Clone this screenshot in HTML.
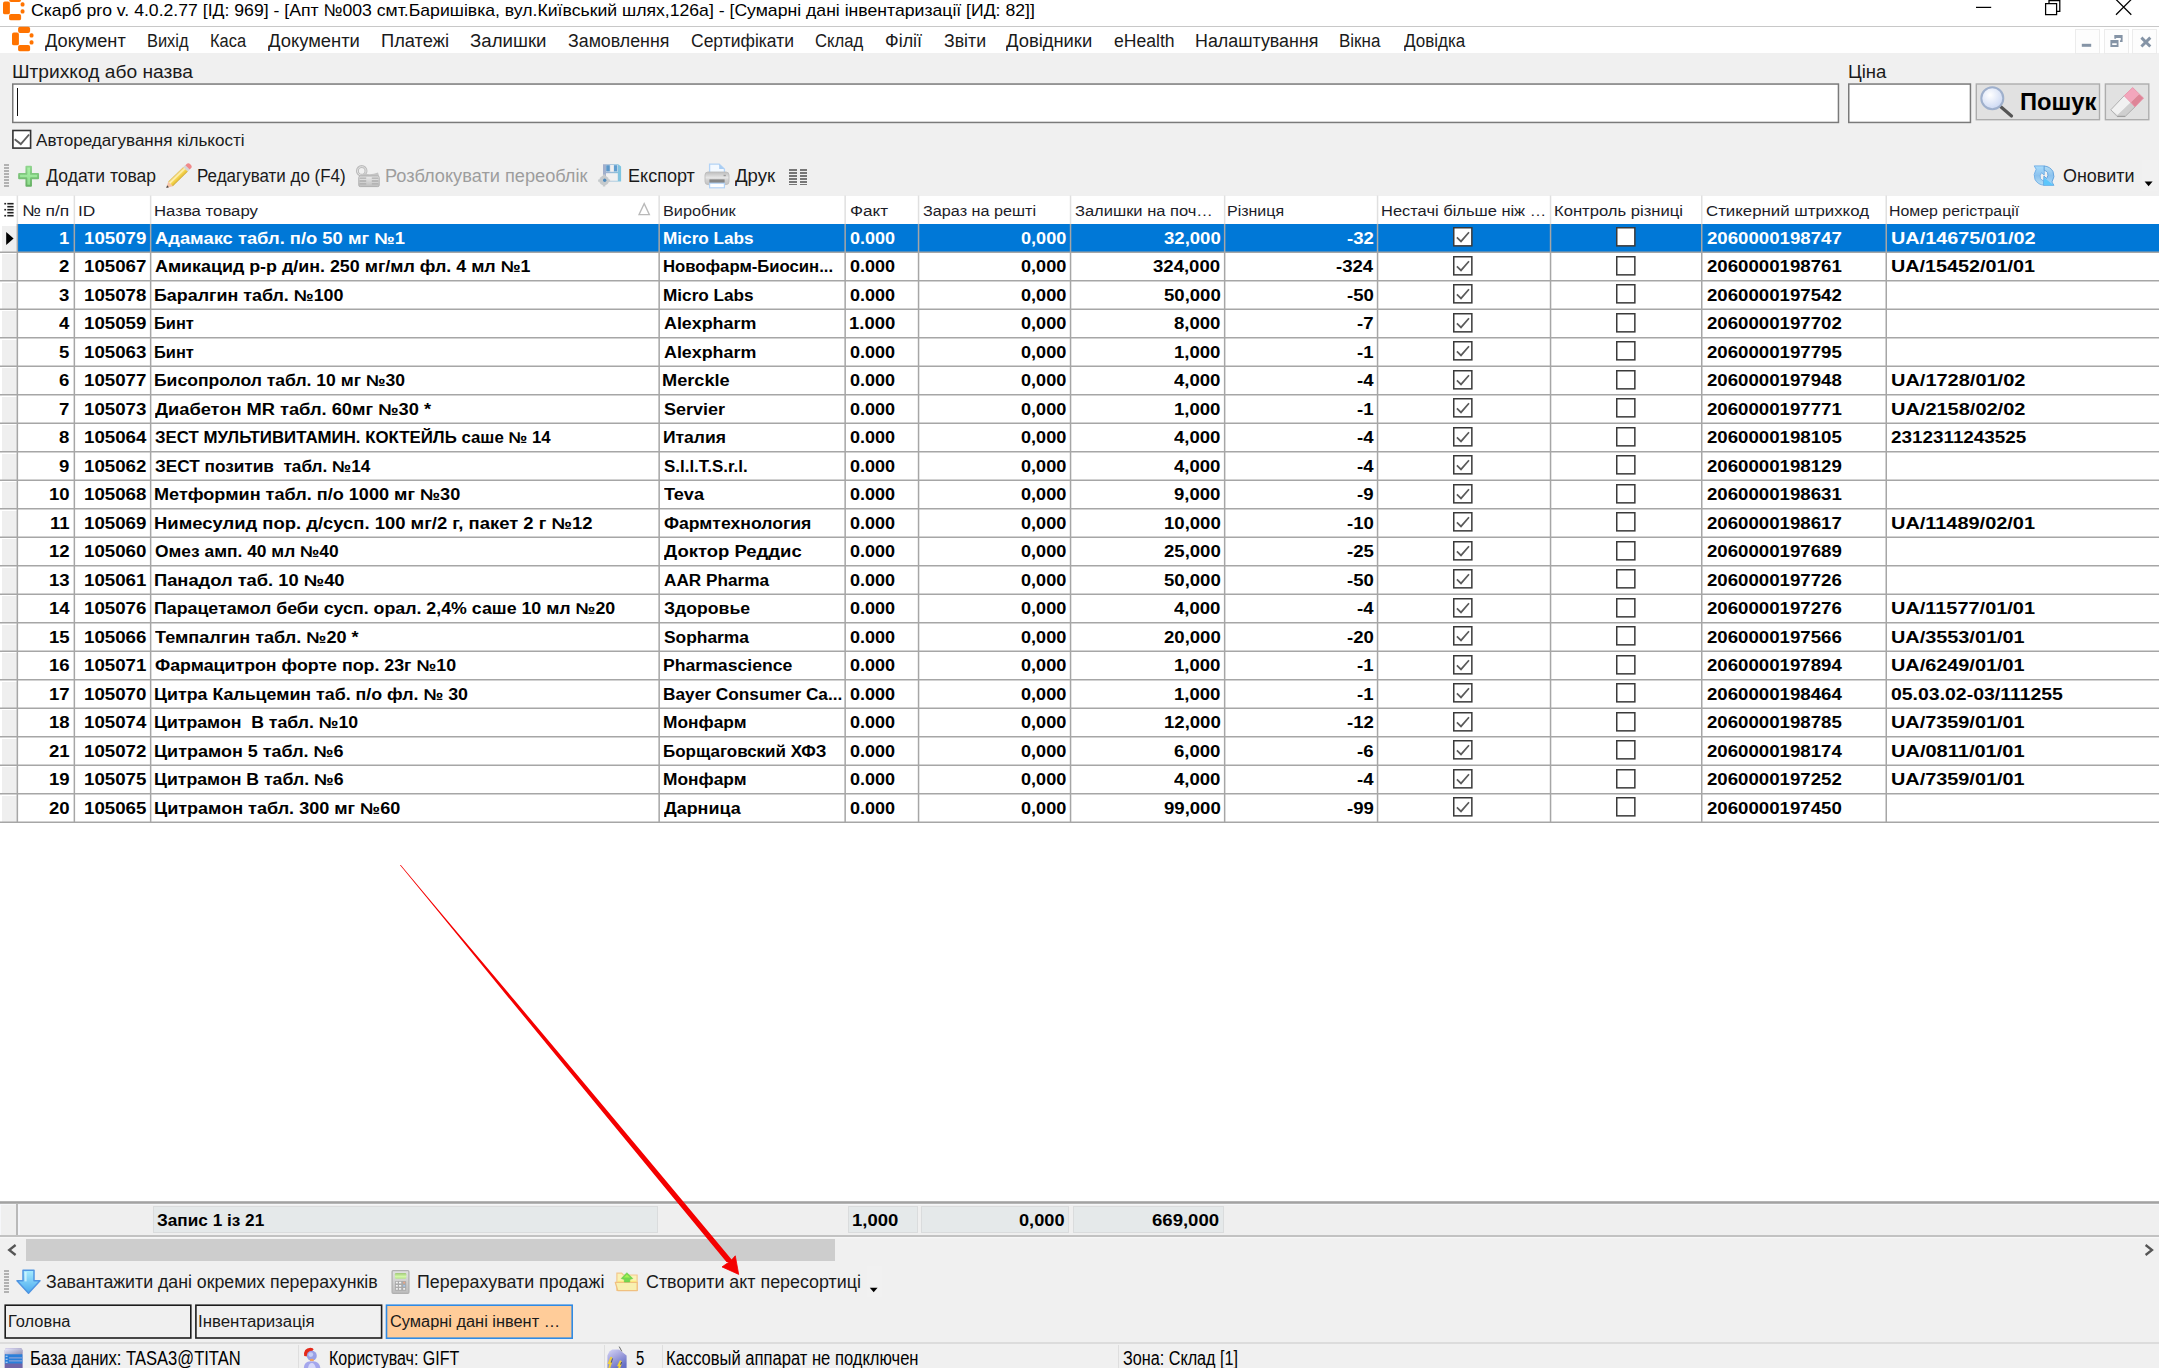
<!DOCTYPE html>
<html lang="uk"><head><meta charset="utf-8"><title>Скарб pro</title>
<style>
html,body{margin:0;padding:0}
body{width:2159px;height:1368px;position:relative;overflow:hidden;background:#f0f0f0;font-family:"Liberation Sans", sans-serif;color:#000}
#r{position:absolute;left:0;top:0;width:2159px;height:1368px;overflow:hidden}
#r>div,#r>svg{position:absolute;box-sizing:border-box}
.t{position:absolute;white-space:pre;line-height:1;transform-origin:0 0;font-size:16px}
</style></head>
<body><div id="r">
<div style="left:0px;top:0px;width:2159px;height:26px;background:#fff"></div>
<div style="left:0px;top:26px;width:2159px;height:1.2px;background:#c8c8c8"></div>
<div style="left:0px;top:27.2px;width:2159px;height:25.8px;background:#fff"></div>
<svg style="left:2.9px;top:-4.2px;width:24px;height:26px;overflow:visible" viewBox="0 0 24 26"><g fill="#ff7300"><rect x="0" y="5.5" width="6.9" height="12.8" rx="1.9"/><rect x="6.1" y="-0.3" width="12" height="6.2" rx="1.9"/><rect x="6.1" y="17.9" width="12" height="6.4" rx="1.9"/><rect x="17.6" y="6.3" width="3.9" height="4.3" rx="1.7"/><rect x="17.6" y="13.3" width="3.9" height="4.3" rx="1.7"/></g></svg>
<svg style="left:11.7px;top:27.4px;width:24px;height:26px;overflow:visible" viewBox="0 0 24 26"><g fill="#ff7300"><rect x="0" y="5.5" width="6.9" height="12.8" rx="1.9"/><rect x="6.1" y="-0.3" width="12" height="6.2" rx="1.9"/><rect x="6.1" y="17.9" width="12" height="6.4" rx="1.9"/><rect x="17.6" y="6.3" width="3.9" height="4.3" rx="1.7"/><rect x="17.6" y="13.3" width="3.9" height="4.3" rx="1.7"/></g></svg>
<svg style="left:1970px;top:0;width:170px;height:20px" viewBox="0 0 170 20"><g stroke="#000" stroke-width="1.25" fill="none"><path d="M6 7.4H21.2"/><path d="M75.6 3.6H86.6V14.6H75.6Z"/><path d="M79 3.6V0.5H89.8V11.4H86.6"/><path d="M146 -0.6L161.3 14.8M161.3 -0.6L146 14.8"/></g></svg>
<div style="left:2075.4px;top:28.5px;width:25px;height:25.2px;background:#fdfdfd;border:1px solid #ececec"></div>
<div style="left:2103.8px;top:28.5px;width:25px;height:25.2px;background:#fdfdfd;border:1px solid #ececec"></div>
<div style="left:2132.2px;top:28.5px;width:25px;height:25.2px;background:#fdfdfd;border:1px solid #ececec"></div>
<svg style="left:2075px;top:28px;width:84px;height:26px" viewBox="0 0 84 26"><g fill="#8594a6"><rect x="6.8" y="15.8" width="9.4" height="3"/><path d="M35.4 12.1h8.1v6.8h-8.1zM37.2 15.2v1.9h4.5v-1.9z" fill-rule="evenodd"/><path d="M39.3 7h8.3v7.1h-2.6v-1.8h0.8v-2.4h-4.7v0.9h-1.8z"/></g><path d="M66.4 9.6l8.9 8.9M75.3 9.6l-8.9 8.9" stroke="#8594a6" stroke-width="2.9"/></svg>
<svg style="left:11px;top:82px;width:1831px;height:43px" viewBox="0 0 1831 43"><rect x="1.75" y="2.05" width="1825.70" height="38.40" fill="#fff" stroke="#7a7a7a" stroke-width="1.5"/></svg>
<div style="left:16.7px;top:88.2px;width:1.3px;height:27.4px;background:#111"></div>
<svg style="left:1847px;top:82px;width:127px;height:43px" viewBox="0 0 127 43"><rect x="1.75" y="2.05" width="121.70" height="38.40" fill="#fff" stroke="#7a7a7a" stroke-width="1.5"/></svg>
<svg style="left:1974px;top:82px;width:128px;height:41px" viewBox="0 0 128 41"><rect x="2.30" y="2.00" width="123.20" height="35.70" fill="#e1e1e1" stroke="#adadad" stroke-width="1.4"/></svg>
<svg style="left:2103px;top:82px;width:48px;height:41px" viewBox="0 0 48 41"><rect x="2.40" y="2.00" width="43.40" height="35.70" fill="#e1e1e1" stroke="#adadad" stroke-width="1.4"/></svg>
<svg style="left:1978px;top:85px;width:40px;height:34px" viewBox="0 0 40 34"><defs><radialGradient id="mg" cx="0.4" cy="0.35" r="0.7"><stop offset="0" stop-color="#fff"/><stop offset="1" stop-color="#c9d6f2"/></radialGradient></defs><path d="M22.5 21.5L33.5 31" stroke="#555" stroke-width="3.2" stroke-linecap="round"/><circle cx="14.3" cy="13.3" r="11" fill="url(#mg)" stroke="#9fb0cc" stroke-width="2"/></svg>
<svg style="left:2106px;top:85px;width:42px;height:34px" viewBox="0 0 42 34"><path d="M18.2 10.7L24.9 17.2L11.8 29.7L4.8 24.8Z" fill="#f1f1f1"/><path d="M24.9 17.2L29 21.9L19.1 31.5H11.2L11.8 29.7Z" fill="#cfcfcf"/><path d="M18.2 10.7L4.8 24.8L11.2 31.5H19.1L29 21.9" fill="none" stroke="#a9a9a9" stroke-width="0.9"/><path d="M11.2 31.4H19.1" stroke="#a0a0a0" stroke-width="1.3"/><path d="M18.2 10.7L26.7 2.6L33.1 9.3L24.9 17.2Z" fill="#f3a6bc"/><path d="M24.9 17.2L33.1 9.3L37.5 13.1L29 21.9Z" fill="#de8597"/><path d="M18.2 10.7L26.7 2.6L37.5 13.1L29 21.9Z" fill="none" stroke="#e88ea4" stroke-width="0.8"/></svg>
<svg style="left:11px;top:128px;width:23px;height:23px" viewBox="0 0 23 23"><rect x="1.90" y="2.50" width="17.70" height="17.60" fill="#fff" stroke="#333" stroke-width="1.6"/></svg>
<svg style="left:12px;top:130px;width:20px;height:20px" viewBox="0 0 20 20"><path d="M2.7 9.2L8.8 14.1L17.1 4.5" fill="none" stroke="#5f5f5f" stroke-width="1.9"/></svg>
<div style="left:4.4px;top:164.0px;width:4.6px;height:1.5px;background:#b2b2b2"></div>
<div style="left:4.4px;top:167.02px;width:4.6px;height:1.5px;background:#b2b2b2"></div>
<div style="left:4.4px;top:170.04px;width:4.6px;height:1.5px;background:#b2b2b2"></div>
<div style="left:4.4px;top:173.06px;width:4.6px;height:1.5px;background:#b2b2b2"></div>
<div style="left:4.4px;top:176.08px;width:4.6px;height:1.5px;background:#b2b2b2"></div>
<div style="left:4.4px;top:179.1px;width:4.6px;height:1.5px;background:#b2b2b2"></div>
<div style="left:4.4px;top:182.12px;width:4.6px;height:1.5px;background:#b2b2b2"></div>
<div style="left:4.4px;top:185.14px;width:4.6px;height:1.5px;background:#b2b2b2"></div>
<svg style="left:17px;top:164px;width:24px;height:24px" viewBox="0 0 24 24"><defs><linearGradient id="pl" x1="0" y1="0" x2="0" y2="1"><stop offset="0" stop-color="#8fd48d"/><stop offset="1" stop-color="#66b164"/></linearGradient><linearGradient id="pf" x1="0" y1="0" x2="0" y2="1"><stop offset="0" stop-color="#aaf3a8"/><stop offset="1" stop-color="#8edb8c"/></linearGradient></defs><path d="M9.4 2.6h4.6v7.3h7.1v4.4h-7.1v7.5H9.4v-7.5H2.1V9.9h7.3z" fill="url(#pf)" stroke="url(#pl)" stroke-width="1.9" stroke-linejoin="round"/></svg>
<svg style="left:165px;top:162px;width:28px;height:28px;overflow:visible" viewBox="0 0 28 28"><defs><linearGradient id="pg" x1="0" y1="0" x2="0" y2="1"><stop offset="0" stop-color="#dcb84a"/><stop offset="0.18" stop-color="#f6e08c"/><stop offset="0.36" stop-color="#fff2b8"/><stop offset="0.55" stop-color="#f6d650"/><stop offset="0.85" stop-color="#e6c23e"/><stop offset="1" stop-color="#c9a02c"/></linearGradient></defs><g transform="translate(1.3 26) rotate(-44.2)"><path d="M0 0L5.9 -3.25V3.25Z" fill="#f7c4a4"/><path d="M0 0L2.4 -1.35V1.35Z" fill="#4a4a4a"/><rect x="5.9" y="-3.25" width="21" height="6.5" fill="url(#pg)"/><rect x="26.9" y="-3.25" width="2.8" height="6.5" fill="#d4d6d8"/><path d="M29.6 -3.1H31.4Q33.8 -3.1 33.8 0T31.4 3.1H29.6Z" fill="#f08a8a"/></g></svg>
<svg style="left:355px;top:164px;width:26px;height:24px" viewBox="0 0 26 24"><defs><linearGradient id="lk" x1="0" y1="0" x2="0" y2="1"><stop offset="0" stop-color="#ececec"/><stop offset="1" stop-color="#bdbdbd"/></linearGradient></defs><circle cx="6.7" cy="6.9" r="4.3" fill="none" stroke="#bcbcbc" stroke-width="3"/><circle cx="6.7" cy="6.9" r="4.3" fill="none" stroke="#e2e2e2" stroke-width="1"/><path d="M3.8 12.6L9.6 9.6Q16 11.4 23 8.6L24.2 12.6Z" fill="#c4c4c4"/><rect x="3.8" y="12" width="20.4" height="10.6" rx="1.4" fill="url(#lk)" stroke="#b0b0b0" stroke-width="1"/><path d="M4.6 14.1h6.6M4.6 17h6.6M4.6 19.9h6.6M16.8 14.1h6.6M16.8 17h6.6M16.8 19.9h6.6" stroke="#adadad" stroke-width="1.4"/></svg>
<svg style="left:598px;top:163px;width:25px;height:25px" viewBox="0 0 25 25"><defs><linearGradient id="fl" x1="0" y1="0" x2="1" y2="0"><stop offset="0" stop-color="#a3aecb"/><stop offset="0.55" stop-color="#96bcd8"/><stop offset="1" stop-color="#7cc6e2"/></linearGradient></defs><path d="M5 1.2h15.2l2.9 2.2v15.2H5z" fill="url(#fl)"/><rect x="8" y="2" width="11.8" height="6.8" fill="#dfe7f1"/><rect x="8.2" y="2.2" width="3.6" height="6.2" fill="#5c97c9"/><rect x="16" y="2.2" width="3.2" height="6.2" fill="#5f9dcf"/><rect x="13" y="2.2" width="2" height="6.2" fill="#f3efec"/><rect x="8" y="10.2" width="11.8" height="7.6" fill="#f1f1f1"/><circle cx="6.1" cy="17.6" r="4.9" fill="#c6cacc"/><path d="M6.1 11.6v12M0.1 17.6h12" stroke="#c6cacc" stroke-width="2.4"/><circle cx="6.7" cy="17.2" r="1.7" fill="#4f8abb"/></svg>
<svg style="left:704px;top:163px;width:26px;height:26px" viewBox="0 0 26 26"><defs><linearGradient id="pr" x1="0" y1="0" x2="0" y2="1"><stop offset="0" stop-color="#bdbdbd"/><stop offset="0.45" stop-color="#e6e6e6"/><stop offset="0.62" stop-color="#d2d2d2"/><stop offset="1" stop-color="#c2c2c2"/></linearGradient></defs><path d="M5.6 1.2h9.6l5.2 4.8V10H5.6z" fill="#f3f9ff" stroke="#b3d3f6" stroke-width="1.3"/><path d="M15.2 1.2v4.8h5.2z" fill="#a9cdf3"/><rect x="1" y="9" width="24" height="12.6" rx="3" fill="url(#pr)" stroke="#bcbcbc" stroke-width="0.9"/><rect x="5.4" y="16.4" width="15.2" height="3.6" fill="#858585"/><rect x="19.6" y="11.8" width="2.2" height="1.4" fill="#9a9a9a"/><rect x="5.6" y="20.2" width="14.8" height="4.6" fill="#fdfeff" stroke="#b3d3f6" stroke-width="1.2"/></svg>
<div style="left:789.2px;top:169.2px;width:7.4px;height:1.5px;background:#777"></div>
<div style="left:799.6px;top:169.2px;width:7.4px;height:1.5px;background:#777"></div>
<div style="left:789.2px;top:172.14999999999998px;width:7.4px;height:1.5px;background:#777"></div>
<div style="left:799.6px;top:172.14999999999998px;width:7.4px;height:1.5px;background:#777"></div>
<div style="left:789.2px;top:175.1px;width:7.4px;height:1.5px;background:#777"></div>
<div style="left:799.6px;top:175.1px;width:7.4px;height:1.5px;background:#777"></div>
<div style="left:789.2px;top:178.04999999999998px;width:7.4px;height:1.5px;background:#777"></div>
<div style="left:799.6px;top:178.04999999999998px;width:7.4px;height:1.5px;background:#777"></div>
<div style="left:789.2px;top:181.0px;width:7.4px;height:1.5px;background:#777"></div>
<div style="left:799.6px;top:181.0px;width:7.4px;height:1.5px;background:#777"></div>
<div style="left:789.2px;top:183.95px;width:7.4px;height:1.5px;background:#777"></div>
<div style="left:799.6px;top:183.95px;width:7.4px;height:1.5px;background:#777"></div>
<svg style="left:2033px;top:164px;width:24px;height:24px" viewBox="0 0 24 24"><defs><linearGradient id="r1" x1="0" y1="0" x2="0" y2="1"><stop offset="0" stop-color="#a8dcfc"/><stop offset="0.5" stop-color="#8cc2ee"/><stop offset="1" stop-color="#b6def4"/></linearGradient><linearGradient id="r2" x1="0" y1="0" x2="0" y2="1"><stop offset="0" stop-color="#c4e0f2"/><stop offset="0.5" stop-color="#8ec8ee"/><stop offset="1" stop-color="#5cc6fb"/></linearGradient></defs><path id="ra" d="M1.2 1.9H11.4L11.2 11.1L8.5 8.7Q6.3 11.6 7.5 14.6Q8.8 16.5 10.9 16.9V21.2Q5 20.7 2.1 15.7Q-0.3 10.5 3.2 5.2Z" fill="url(#r1)" stroke="#6faee6" stroke-width="0.9" stroke-linejoin="round"/><path d="M1.2 1.9H11.4L11.2 11.1L8.5 8.7Q6.3 11.6 7.5 14.6Q8.8 16.5 10.9 16.9V21.2Q5 20.7 2.1 15.7Q-0.3 10.5 3.2 5.2Z" transform="rotate(180 11.05 11.6)" fill="url(#r1)" stroke="#5c9fdc" stroke-width="0.9" stroke-linejoin="round"/><path d="M10.8 13.4L20.8 21.2H10.8Z" fill="#5cc6fb"/></svg>
<div style="left:2142px;top:159.5px;width:15.5px;height:31.5px;background:#f1f1f1"></div>
<svg style="left:2144px;top:181px;width:10px;height:6px" viewBox="0 0 10 6"><path d="M0.6 0.6H8.6L4.6 5.2Z" fill="#000"/></svg>
<div style="left:0px;top:195.5px;width:2159px;height:1005.7px;background:#fff"></div>
<div style="left:2.0px;top:225.8px;width:14.6px;height:25.8px;background:#efefef"></div>
<div style="left:2.0px;top:254.3px;width:14.6px;height:25.8px;background:#efefef"></div>
<div style="left:2.0px;top:282.8px;width:14.6px;height:25.8px;background:#efefef"></div>
<div style="left:2.0px;top:311.3px;width:14.6px;height:25.8px;background:#efefef"></div>
<div style="left:2.0px;top:339.8px;width:14.6px;height:25.8px;background:#efefef"></div>
<div style="left:2.0px;top:368.3px;width:14.6px;height:25.8px;background:#efefef"></div>
<div style="left:2.0px;top:396.8px;width:14.6px;height:25.8px;background:#efefef"></div>
<div style="left:2.0px;top:425.3px;width:14.6px;height:25.8px;background:#efefef"></div>
<div style="left:2.0px;top:453.8px;width:14.6px;height:25.8px;background:#efefef"></div>
<div style="left:2.0px;top:482.3px;width:14.6px;height:25.8px;background:#efefef"></div>
<div style="left:2.0px;top:510.8px;width:14.6px;height:25.8px;background:#efefef"></div>
<div style="left:2.0px;top:539.3px;width:14.6px;height:25.8px;background:#efefef"></div>
<div style="left:2.0px;top:567.8px;width:14.6px;height:25.8px;background:#efefef"></div>
<div style="left:2.0px;top:596.3px;width:14.6px;height:25.8px;background:#efefef"></div>
<div style="left:2.0px;top:624.8px;width:14.6px;height:25.8px;background:#efefef"></div>
<div style="left:2.0px;top:653.3px;width:14.6px;height:25.8px;background:#efefef"></div>
<div style="left:2.0px;top:681.8px;width:14.6px;height:25.8px;background:#efefef"></div>
<div style="left:2.0px;top:710.3px;width:14.6px;height:25.8px;background:#efefef"></div>
<div style="left:2.0px;top:738.8px;width:14.6px;height:25.8px;background:#efefef"></div>
<div style="left:2.0px;top:767.3px;width:14.6px;height:25.8px;background:#efefef"></div>
<div style="left:2.0px;top:795.8px;width:14.6px;height:25.8px;background:#efefef"></div>
<div style="left:16.8px;top:224.0px;width:2142.2px;height:27.8px;background:#0078d7"></div>
<svg style="left:0;top:0;width:2159px;height:830px" viewBox="0 0 2159 830" fill="none"><path d="M17.35 195.5V224.0M74.35 195.5V224.0M150.65 195.5V224.0M659.15 195.5V224.0M845.15 195.5V224.0M918.55 195.5V224.0M1070.55 195.5V224.0M1224.65 195.5V224.0M1377.55 195.5V224.0M1550.55 195.5V224.0M1701.75 195.5V224.0M1886.25 195.5V224.0" stroke="#e0e0e0" stroke-width="1.5"/><path d="M0 252.30H2159M0 280.80H2159M0 309.30H2159M0 337.80H2159M0 366.30H2159M0 394.80H2159M0 423.30H2159M0 451.80H2159M0 480.30H2159M0 508.80H2159M0 537.30H2159M0 565.80H2159M0 594.30H2159M0 622.80H2159M0 651.30H2159M0 679.80H2159M0 708.30H2159M0 736.80H2159M0 765.30H2159M0 793.80H2159M0 822.30H2159M17.35 224.0V823.0M74.35 224.0V823.0M150.65 224.0V823.0M659.15 224.0V823.0M845.15 224.0V823.0M918.55 224.0V823.0M1070.55 224.0V823.0M1224.65 224.0V823.0M1377.55 224.0V823.0M1550.55 224.0V823.0M1701.75 224.0V823.0M1886.25 224.0V823.0" stroke="#a6a6a6" stroke-width="1.5"/></svg>
<svg style="left:3px;top:201px;width:13px;height:18px" viewBox="0 0 13 18" fill="#222"><rect x="4.3" y="1.9" width="6.3" height="1.6"/><rect x="4.3" y="4.9" width="6.3" height="1.6"/><rect x="4.3" y="7.9" width="6.3" height="1.6"/><rect x="4.3" y="10.9" width="6.3" height="1.6"/><rect x="4.3" y="13.9" width="6.3" height="1.6"/><rect x="1.3" y="1.9" width="1.8" height="1.6"/><rect x="1.3" y="7.9" width="1.8" height="1.6"/><rect x="1.3" y="13.9" width="1.8" height="1.6"/></svg>
<svg style="left:5px;top:231px;width:10px;height:15px" viewBox="0 0 10 15"><path d="M1.2 0.9L8.6 7.4L1.2 14Z" fill="#000"/></svg>
<svg style="left:637px;top:202px;width:14px;height:14px" viewBox="0 0 14 14"><path d="M7.2 1.6L12.4 12.6H2Z" fill="#fff" stroke="#b9b9b9" stroke-width="1.3"/></svg>
<svg style="left:1453.1px;top:227.4px;width:20px;height:20px" viewBox="0 0 20 20"><rect x="0.75" y="0.75" width="18.1" height="18.1" fill="#fff" stroke="#3a3a3a" stroke-width="1.5"/><path d="M3.9 10.4L8 14.4L16 5.2" fill="none" stroke="#5a5a5a" stroke-width="1.7"/></svg>
<svg style="left:1615.7px;top:227.4px;width:20px;height:20px" viewBox="0 0 20 20"><rect x="0.75" y="0.75" width="18.1" height="18.1" fill="#fff" stroke="#3a3a3a" stroke-width="1.5"/></svg>
<svg style="left:1453.1px;top:255.9px;width:20px;height:20px" viewBox="0 0 20 20"><rect x="0.75" y="0.75" width="18.1" height="18.1" fill="#fff" stroke="#3a3a3a" stroke-width="1.5"/><path d="M3.9 10.4L8 14.4L16 5.2" fill="none" stroke="#5a5a5a" stroke-width="1.7"/></svg>
<svg style="left:1615.7px;top:255.9px;width:20px;height:20px" viewBox="0 0 20 20"><rect x="0.75" y="0.75" width="18.1" height="18.1" fill="#fff" stroke="#3a3a3a" stroke-width="1.5"/></svg>
<svg style="left:1453.1px;top:284.4px;width:20px;height:20px" viewBox="0 0 20 20"><rect x="0.75" y="0.75" width="18.1" height="18.1" fill="#fff" stroke="#3a3a3a" stroke-width="1.5"/><path d="M3.9 10.4L8 14.4L16 5.2" fill="none" stroke="#5a5a5a" stroke-width="1.7"/></svg>
<svg style="left:1615.7px;top:284.4px;width:20px;height:20px" viewBox="0 0 20 20"><rect x="0.75" y="0.75" width="18.1" height="18.1" fill="#fff" stroke="#3a3a3a" stroke-width="1.5"/></svg>
<svg style="left:1453.1px;top:312.9px;width:20px;height:20px" viewBox="0 0 20 20"><rect x="0.75" y="0.75" width="18.1" height="18.1" fill="#fff" stroke="#3a3a3a" stroke-width="1.5"/><path d="M3.9 10.4L8 14.4L16 5.2" fill="none" stroke="#5a5a5a" stroke-width="1.7"/></svg>
<svg style="left:1615.7px;top:312.9px;width:20px;height:20px" viewBox="0 0 20 20"><rect x="0.75" y="0.75" width="18.1" height="18.1" fill="#fff" stroke="#3a3a3a" stroke-width="1.5"/></svg>
<svg style="left:1453.1px;top:341.4px;width:20px;height:20px" viewBox="0 0 20 20"><rect x="0.75" y="0.75" width="18.1" height="18.1" fill="#fff" stroke="#3a3a3a" stroke-width="1.5"/><path d="M3.9 10.4L8 14.4L16 5.2" fill="none" stroke="#5a5a5a" stroke-width="1.7"/></svg>
<svg style="left:1615.7px;top:341.4px;width:20px;height:20px" viewBox="0 0 20 20"><rect x="0.75" y="0.75" width="18.1" height="18.1" fill="#fff" stroke="#3a3a3a" stroke-width="1.5"/></svg>
<svg style="left:1453.1px;top:369.9px;width:20px;height:20px" viewBox="0 0 20 20"><rect x="0.75" y="0.75" width="18.1" height="18.1" fill="#fff" stroke="#3a3a3a" stroke-width="1.5"/><path d="M3.9 10.4L8 14.4L16 5.2" fill="none" stroke="#5a5a5a" stroke-width="1.7"/></svg>
<svg style="left:1615.7px;top:369.9px;width:20px;height:20px" viewBox="0 0 20 20"><rect x="0.75" y="0.75" width="18.1" height="18.1" fill="#fff" stroke="#3a3a3a" stroke-width="1.5"/></svg>
<svg style="left:1453.1px;top:398.4px;width:20px;height:20px" viewBox="0 0 20 20"><rect x="0.75" y="0.75" width="18.1" height="18.1" fill="#fff" stroke="#3a3a3a" stroke-width="1.5"/><path d="M3.9 10.4L8 14.4L16 5.2" fill="none" stroke="#5a5a5a" stroke-width="1.7"/></svg>
<svg style="left:1615.7px;top:398.4px;width:20px;height:20px" viewBox="0 0 20 20"><rect x="0.75" y="0.75" width="18.1" height="18.1" fill="#fff" stroke="#3a3a3a" stroke-width="1.5"/></svg>
<svg style="left:1453.1px;top:426.9px;width:20px;height:20px" viewBox="0 0 20 20"><rect x="0.75" y="0.75" width="18.1" height="18.1" fill="#fff" stroke="#3a3a3a" stroke-width="1.5"/><path d="M3.9 10.4L8 14.4L16 5.2" fill="none" stroke="#5a5a5a" stroke-width="1.7"/></svg>
<svg style="left:1615.7px;top:426.9px;width:20px;height:20px" viewBox="0 0 20 20"><rect x="0.75" y="0.75" width="18.1" height="18.1" fill="#fff" stroke="#3a3a3a" stroke-width="1.5"/></svg>
<svg style="left:1453.1px;top:455.4px;width:20px;height:20px" viewBox="0 0 20 20"><rect x="0.75" y="0.75" width="18.1" height="18.1" fill="#fff" stroke="#3a3a3a" stroke-width="1.5"/><path d="M3.9 10.4L8 14.4L16 5.2" fill="none" stroke="#5a5a5a" stroke-width="1.7"/></svg>
<svg style="left:1615.7px;top:455.4px;width:20px;height:20px" viewBox="0 0 20 20"><rect x="0.75" y="0.75" width="18.1" height="18.1" fill="#fff" stroke="#3a3a3a" stroke-width="1.5"/></svg>
<svg style="left:1453.1px;top:483.9px;width:20px;height:20px" viewBox="0 0 20 20"><rect x="0.75" y="0.75" width="18.1" height="18.1" fill="#fff" stroke="#3a3a3a" stroke-width="1.5"/><path d="M3.9 10.4L8 14.4L16 5.2" fill="none" stroke="#5a5a5a" stroke-width="1.7"/></svg>
<svg style="left:1615.7px;top:483.9px;width:20px;height:20px" viewBox="0 0 20 20"><rect x="0.75" y="0.75" width="18.1" height="18.1" fill="#fff" stroke="#3a3a3a" stroke-width="1.5"/></svg>
<svg style="left:1453.1px;top:512.4px;width:20px;height:20px" viewBox="0 0 20 20"><rect x="0.75" y="0.75" width="18.1" height="18.1" fill="#fff" stroke="#3a3a3a" stroke-width="1.5"/><path d="M3.9 10.4L8 14.4L16 5.2" fill="none" stroke="#5a5a5a" stroke-width="1.7"/></svg>
<svg style="left:1615.7px;top:512.4px;width:20px;height:20px" viewBox="0 0 20 20"><rect x="0.75" y="0.75" width="18.1" height="18.1" fill="#fff" stroke="#3a3a3a" stroke-width="1.5"/></svg>
<svg style="left:1453.1px;top:540.9px;width:20px;height:20px" viewBox="0 0 20 20"><rect x="0.75" y="0.75" width="18.1" height="18.1" fill="#fff" stroke="#3a3a3a" stroke-width="1.5"/><path d="M3.9 10.4L8 14.4L16 5.2" fill="none" stroke="#5a5a5a" stroke-width="1.7"/></svg>
<svg style="left:1615.7px;top:540.9px;width:20px;height:20px" viewBox="0 0 20 20"><rect x="0.75" y="0.75" width="18.1" height="18.1" fill="#fff" stroke="#3a3a3a" stroke-width="1.5"/></svg>
<svg style="left:1453.1px;top:569.4px;width:20px;height:20px" viewBox="0 0 20 20"><rect x="0.75" y="0.75" width="18.1" height="18.1" fill="#fff" stroke="#3a3a3a" stroke-width="1.5"/><path d="M3.9 10.4L8 14.4L16 5.2" fill="none" stroke="#5a5a5a" stroke-width="1.7"/></svg>
<svg style="left:1615.7px;top:569.4px;width:20px;height:20px" viewBox="0 0 20 20"><rect x="0.75" y="0.75" width="18.1" height="18.1" fill="#fff" stroke="#3a3a3a" stroke-width="1.5"/></svg>
<svg style="left:1453.1px;top:597.9px;width:20px;height:20px" viewBox="0 0 20 20"><rect x="0.75" y="0.75" width="18.1" height="18.1" fill="#fff" stroke="#3a3a3a" stroke-width="1.5"/><path d="M3.9 10.4L8 14.4L16 5.2" fill="none" stroke="#5a5a5a" stroke-width="1.7"/></svg>
<svg style="left:1615.7px;top:597.9px;width:20px;height:20px" viewBox="0 0 20 20"><rect x="0.75" y="0.75" width="18.1" height="18.1" fill="#fff" stroke="#3a3a3a" stroke-width="1.5"/></svg>
<svg style="left:1453.1px;top:626.4px;width:20px;height:20px" viewBox="0 0 20 20"><rect x="0.75" y="0.75" width="18.1" height="18.1" fill="#fff" stroke="#3a3a3a" stroke-width="1.5"/><path d="M3.9 10.4L8 14.4L16 5.2" fill="none" stroke="#5a5a5a" stroke-width="1.7"/></svg>
<svg style="left:1615.7px;top:626.4px;width:20px;height:20px" viewBox="0 0 20 20"><rect x="0.75" y="0.75" width="18.1" height="18.1" fill="#fff" stroke="#3a3a3a" stroke-width="1.5"/></svg>
<svg style="left:1453.1px;top:654.9px;width:20px;height:20px" viewBox="0 0 20 20"><rect x="0.75" y="0.75" width="18.1" height="18.1" fill="#fff" stroke="#3a3a3a" stroke-width="1.5"/><path d="M3.9 10.4L8 14.4L16 5.2" fill="none" stroke="#5a5a5a" stroke-width="1.7"/></svg>
<svg style="left:1615.7px;top:654.9px;width:20px;height:20px" viewBox="0 0 20 20"><rect x="0.75" y="0.75" width="18.1" height="18.1" fill="#fff" stroke="#3a3a3a" stroke-width="1.5"/></svg>
<svg style="left:1453.1px;top:683.4px;width:20px;height:20px" viewBox="0 0 20 20"><rect x="0.75" y="0.75" width="18.1" height="18.1" fill="#fff" stroke="#3a3a3a" stroke-width="1.5"/><path d="M3.9 10.4L8 14.4L16 5.2" fill="none" stroke="#5a5a5a" stroke-width="1.7"/></svg>
<svg style="left:1615.7px;top:683.4px;width:20px;height:20px" viewBox="0 0 20 20"><rect x="0.75" y="0.75" width="18.1" height="18.1" fill="#fff" stroke="#3a3a3a" stroke-width="1.5"/></svg>
<svg style="left:1453.1px;top:711.9px;width:20px;height:20px" viewBox="0 0 20 20"><rect x="0.75" y="0.75" width="18.1" height="18.1" fill="#fff" stroke="#3a3a3a" stroke-width="1.5"/><path d="M3.9 10.4L8 14.4L16 5.2" fill="none" stroke="#5a5a5a" stroke-width="1.7"/></svg>
<svg style="left:1615.7px;top:711.9px;width:20px;height:20px" viewBox="0 0 20 20"><rect x="0.75" y="0.75" width="18.1" height="18.1" fill="#fff" stroke="#3a3a3a" stroke-width="1.5"/></svg>
<svg style="left:1453.1px;top:740.4px;width:20px;height:20px" viewBox="0 0 20 20"><rect x="0.75" y="0.75" width="18.1" height="18.1" fill="#fff" stroke="#3a3a3a" stroke-width="1.5"/><path d="M3.9 10.4L8 14.4L16 5.2" fill="none" stroke="#5a5a5a" stroke-width="1.7"/></svg>
<svg style="left:1615.7px;top:740.4px;width:20px;height:20px" viewBox="0 0 20 20"><rect x="0.75" y="0.75" width="18.1" height="18.1" fill="#fff" stroke="#3a3a3a" stroke-width="1.5"/></svg>
<svg style="left:1453.1px;top:768.9px;width:20px;height:20px" viewBox="0 0 20 20"><rect x="0.75" y="0.75" width="18.1" height="18.1" fill="#fff" stroke="#3a3a3a" stroke-width="1.5"/><path d="M3.9 10.4L8 14.4L16 5.2" fill="none" stroke="#5a5a5a" stroke-width="1.7"/></svg>
<svg style="left:1615.7px;top:768.9px;width:20px;height:20px" viewBox="0 0 20 20"><rect x="0.75" y="0.75" width="18.1" height="18.1" fill="#fff" stroke="#3a3a3a" stroke-width="1.5"/></svg>
<svg style="left:1453.1px;top:797.4px;width:20px;height:20px" viewBox="0 0 20 20"><rect x="0.75" y="0.75" width="18.1" height="18.1" fill="#fff" stroke="#3a3a3a" stroke-width="1.5"/><path d="M3.9 10.4L8 14.4L16 5.2" fill="none" stroke="#5a5a5a" stroke-width="1.7"/></svg>
<svg style="left:1615.7px;top:797.4px;width:20px;height:20px" viewBox="0 0 20 20"><rect x="0.75" y="0.75" width="18.1" height="18.1" fill="#fff" stroke="#3a3a3a" stroke-width="1.5"/></svg>
<div style="left:0px;top:1203.7px;width:2159px;height:32px;background:#efefef"></div>
<div style="left:0px;top:1203.9px;width:2159px;height:1.3px;background:#f5f6f8"></div>
<div style="left:0px;top:1204px;width:1.4px;height:31px;background:#f6f7fa"></div>
<div style="left:18.0px;top:1204px;width:1.5px;height:31px;background:#f4f5f8"></div>
<div style="left:16.2px;top:1203.7px;width:1.7px;height:31.4px;background:#b9b9b9"></div>
<svg style="left:0;top:1199px;width:2159px;height:6px" viewBox="0 0 2159 6"><path d="M0 3.5H2159" stroke="#a2a2a2" stroke-width="2.7"/></svg>
<div style="left:153.2px;top:1205.8px;width:505.0px;height:27.6px;background:#e5e9ea;border:1px solid #dadcdd"></div>
<div style="left:847.9px;top:1205.8px;width:69.8px;height:27.6px;background:#e5e9ea;border:1px solid #dadcdd"></div>
<div style="left:921.0px;top:1205.8px;width:148.4px;height:27.6px;background:#e5e9ea;border:1px solid #dadcdd"></div>
<div style="left:1072.6px;top:1205.8px;width:151.6px;height:27.6px;background:#e5e9ea;border:1px solid #dadcdd"></div>
<svg style="left:0;top:1233px;width:2159px;height:6px" viewBox="0 0 2159 6"><path d="M0 2.9H2159" stroke="#c2c2c2" stroke-width="2"/><path d="M0 4.6H2159" stroke="#f7f7f7" stroke-width="1.4"/></svg>
<div style="left:25.8px;top:1238.6px;width:809.7px;height:22.0px;background:#cdcdcd"></div>
<svg style="left:6px;top:1243px;width:12px;height:14px" viewBox="0 0 12 14"><path d="M9.6 2L3.2 7L9.6 12" fill="none" stroke="#555" stroke-width="2.3"/></svg>
<svg style="left:2142.5px;top:1243px;width:12px;height:14px" viewBox="0 0 12 14"><path d="M2.6 2L9 7L2.6 12" fill="none" stroke="#555" stroke-width="2.3"/></svg>
<div style="left:4.4px;top:1270.0px;width:4.6px;height:1.5px;background:#b2b2b2"></div>
<div style="left:4.4px;top:1273.02px;width:4.6px;height:1.5px;background:#b2b2b2"></div>
<div style="left:4.4px;top:1276.04px;width:4.6px;height:1.5px;background:#b2b2b2"></div>
<div style="left:4.4px;top:1279.06px;width:4.6px;height:1.5px;background:#b2b2b2"></div>
<div style="left:4.4px;top:1282.08px;width:4.6px;height:1.5px;background:#b2b2b2"></div>
<div style="left:4.4px;top:1285.1px;width:4.6px;height:1.5px;background:#b2b2b2"></div>
<div style="left:4.4px;top:1288.12px;width:4.6px;height:1.5px;background:#b2b2b2"></div>
<div style="left:4.4px;top:1291.14px;width:4.6px;height:1.5px;background:#b2b2b2"></div>
<svg style="left:15px;top:1268px;width:27px;height:27px" viewBox="0 0 27 27"><defs><linearGradient id="ba" x1="0" y1="0" x2="0" y2="1"><stop offset="0" stop-color="#a6ecff"/><stop offset="1" stop-color="#48a8ee"/></linearGradient></defs><path d="M8 2.3h11v10.4h6L13.5 25.3L2 12.7h6z" fill="url(#ba)" stroke="#4f95e2" stroke-width="1.5" stroke-linejoin="round"/><path d="M9.6 4h2v9.4h-2z" fill="#d8f6ff" opacity="0.8"/></svg>
<svg style="left:391px;top:1269px;width:20px;height:26px" viewBox="0 0 20 26"><defs><linearGradient id="cl" x1="0" y1="0" x2="0" y2="1"><stop offset="0" stop-color="#e2e2e2"/><stop offset="1" stop-color="#bcbcbc"/></linearGradient><linearGradient id="cg" x1="0" y1="0" x2="0" y2="1"><stop offset="0" stop-color="#a2c87a"/><stop offset="0.6" stop-color="#d2f8a8"/><stop offset="1" stop-color="#b6e08c"/></linearGradient></defs><rect x="1.1" y="1.7" width="16.8" height="22.6" rx="1" fill="url(#cl)" stroke="#b0b0b0" stroke-width="1.3"/><rect x="3.9" y="4.1" width="11.4" height="5.7" rx="1.2" fill="url(#cg)"/><rect x="4" y="12" width="11.2" height="9.8" rx="0.8" fill="#aaaaaa"/><g fill="#f4f4f4"><rect x="4.9" y="12.8" width="1.9" height="1.6"/><rect x="8" y="12.8" width="2.2" height="1.6"/><rect x="4.9" y="16" width="1.9" height="1.6"/><rect x="8" y="16" width="2.2" height="1.6"/><rect x="4.9" y="19.1" width="1.9" height="1.6"/><rect x="8" y="19.1" width="2.2" height="1.6"/><rect x="12.2" y="19.1" width="1.9" height="1.6"/></g><rect x="12.2" y="12.8" width="1.9" height="1.6" fill="#f0a684"/><rect x="12.2" y="16" width="1.9" height="1.6" fill="#a4c8f0"/></svg>
<svg style="left:614px;top:1270px;width:25px;height:23px" viewBox="0 0 25 23"><path d="M2.9 3.1h4.8l1.7 1.9h13.7v15.4H2.9z" fill="#faf2b6" stroke="#f3c88e" stroke-width="1.2"/><rect x="3.6" y="10.6" width="18.8" height="1.8" fill="#fff37e"/><path d="M1.3 12.4h21.9v8.2H3.8z" fill="#f8f0b0" stroke="#f0c080" stroke-width="1.3" stroke-linejoin="round"/><path d="M12.9 2.7L18.8 8.6L15.8 9.4V12H10.3V9.4L7.2 8.6Z" fill="#74d84f" stroke="#67cf4a" stroke-width="0.6" stroke-linejoin="round"/><path d="M12.9 4.4L16 7.6H9.8Z" fill="#a6f052"/></svg>
<div style="left:866.5px;top:1266px;width:15px;height:30.5px;background:#f1f1f1"></div>
<svg style="left:869px;top:1287px;width:10px;height:6px" viewBox="0 0 10 6"><path d="M0.8 0.8H8.6L4.7 5.2Z" fill="#000"/></svg>
<svg style="left:3px;top:1303px;width:191px;height:38px" viewBox="0 0 191 38"><rect x="2.20" y="2.20" width="185.60" height="32.80" fill="#f0f0f0" stroke="#1c1c1c" stroke-width="1.6"/></svg>
<svg style="left:194px;top:1303px;width:191px;height:38px" viewBox="0 0 191 38"><rect x="1.90" y="2.20" width="185.70" height="32.80" fill="#f0f0f0" stroke="#1c1c1c" stroke-width="1.6"/></svg>
<svg style="left:384px;top:1303px;width:191px;height:38px" viewBox="0 0 191 38"><rect x="2.50" y="2.20" width="185.70" height="33.00" fill="#ffcc99" stroke="#2f8ae4" stroke-width="1.6"/></svg>
<div style="left:0px;top:1342.0px;width:2159px;height:1.5px;background:#dcdcdc"></div>
<div style="left:297.5px;top:1345px;width:1.3px;height:23px;background:#dedede"></div>
<div style="left:603.6px;top:1345px;width:1.3px;height:23px;background:#dedede"></div>
<div style="left:662.2px;top:1345px;width:1.3px;height:23px;background:#dedede"></div>
<div style="left:1118.2px;top:1345px;width:1.3px;height:23px;background:#dedede"></div>
<svg style="left:4px;top:1347px;width:20px;height:21px" viewBox="0 0 20 21"><defs><linearGradient id="d1" x1="0" y1="0" x2="1" y2="1"><stop offset="0" stop-color="#ececff"/><stop offset="1" stop-color="#8c8cb0"/></linearGradient></defs><rect x="0.8" y="1.3" width="17.6" height="22" rx="2.2" fill="#7a6cac"/><rect x="0.8" y="1.3" width="17.6" height="6.6" rx="2" fill="url(#d1)"/><rect x="0.8" y="7.3" width="17.6" height="9.4" fill="#2a7fda"/><path d="M5 10.9h13M5 13.9h13" stroke="#8aa2d6" stroke-width="1.1"/><path d="M1.6 9.2h2M1.6 12.2h2M1.6 15.2h2" stroke="#cfe0f8" stroke-width="1.1"/><path d="M0.8 16.7h17.6v4.3H0.8z" fill="#6f64a8"/></svg>
<svg style="left:303px;top:1346px;width:18px;height:22px" viewBox="0 0 18 22"><path d="M1.2 10Q0.2 2.2 7.4 1.8Q10.4 1.8 10.6 3.6L4.4 10.4z" fill="#e4291a"/><circle cx="8.8" cy="9.8" r="5" fill="#98a0e6"/><circle cx="7.8" cy="8.6" r="2.4" fill="#c4cdf6"/><ellipse cx="8.8" cy="14" rx="2.2" ry="1.3" fill="#f0a060"/><path d="M0.8 22Q1.4 14.6 8.8 15.4Q16.2 14.6 17.4 22z" fill="#a4a6ec"/><path d="M5 22Q6 17 8.8 17T12.8 22z" fill="#d6d8fa"/></svg>
<svg style="left:606px;top:1345px;width:22px;height:23px" viewBox="0 0 22 23"><defs><linearGradient id="cs" x1="0" y1="0" x2="0.6" y2="1"><stop offset="0" stop-color="#d6d6f6"/><stop offset="0.5" stop-color="#a2a2de"/><stop offset="1" stop-color="#6670c6"/></linearGradient></defs><path d="M1.4 23V10.4L3.4 6.4L6.2 4.6H13L20.6 10.6V23z" fill="url(#cs)"/><path d="M13.2 1.6L15.8 6.4" stroke="#666" stroke-width="1"/><path d="M5.4 12l-2.4 6h1.8l-1.6 5M14.8 15.6l-2.2 4.6h1.6l-1.2 3" fill="none" stroke="#f2d23c" stroke-width="2"/><path d="M6.6 13.4l-1.4 4.4M15.6 17l-1 2.8" stroke="#444" stroke-width="0.8"/></svg>
<svg style="left:0;top:0;width:2159px;height:1368px;pointer-events:none" viewBox="0 0 2159 1368"><path d="M399.9 865.0L428.7 900.0L453.3 930.0L481.9 965.0L510.5 1000.0L551.6 1050.0L596.9 1105.0L634.0 1150.0L675.2 1200.0L726.5 1262.0L733.7 1262.0L682.0 1200.0L640.2 1150.0L602.5 1105.0L556.4 1050.0L514.4 1000.0L484.9 965.0L455.3 930.0L430.1 900.0L400.8 865.0Z" fill="#f40000"/><path d="M738.7 1274.4L735.3 1255.8L731.0 1260.6L722.0 1266.9Z" fill="#f40000" stroke="#f40000" stroke-width="0.8" stroke-linejoin="round"/></svg>
<span class="t" style="left:31.30px;top:2.10px;font-size:17px;transform:scaleX(1.0373);">Скарб pro v. 4.0.2.77 [ІД: 969] - [Апт №003 смт.Баришівка, вул.Київський шлях,126а] - [Сумарні дані інвентаризації [ИД: 82]]</span>
<span class="t" style="left:45.20px;top:31.50px;font-size:18px;color:#1a1a1a;transform:scaleX(1.0112);">Документ</span>
<span class="t" style="left:146.69px;top:31.50px;font-size:18px;color:#1a1a1a;transform:scaleX(0.9121);">Вихід</span>
<span class="t" style="left:209.99px;top:31.50px;font-size:18px;color:#1a1a1a;transform:scaleX(0.9140);">Каса</span>
<span class="t" style="left:268.40px;top:31.50px;font-size:18px;color:#1a1a1a;transform:scaleX(1.0220);">Документи</span>
<span class="t" style="left:380.58px;top:31.50px;font-size:18px;color:#1a1a1a;transform:scaleX(1.0162);">Платежі</span>
<span class="t" style="left:470.00px;top:31.50px;font-size:18px;color:#1a1a1a;transform:scaleX(1.0363);">Залишки</span>
<span class="t" style="left:567.60px;top:31.50px;font-size:18px;color:#1a1a1a;transform:scaleX(0.9881);">Замовлення</span>
<span class="t" style="left:690.80px;top:31.50px;font-size:18px;color:#1a1a1a;transform:scaleX(0.9718);">Сертифікати</span>
<span class="t" style="left:815.40px;top:31.50px;font-size:18px;color:#1a1a1a;transform:scaleX(0.9279);">Склад</span>
<span class="t" style="left:884.90px;top:31.50px;font-size:18px;color:#1a1a1a;transform:scaleX(0.9976);">Філії</span>
<span class="t" style="left:943.70px;top:31.50px;font-size:18px;color:#1a1a1a;transform:scaleX(0.9837);">Звіти</span>
<span class="t" style="left:1006.30px;top:31.50px;font-size:18px;color:#1a1a1a;transform:scaleX(1.0211);">Довідники</span>
<span class="t" style="left:1114.00px;top:31.50px;font-size:18px;color:#1a1a1a;transform:scaleX(0.9765);">eHealth</span>
<span class="t" style="left:1195.31px;top:31.50px;font-size:18px;color:#1a1a1a;transform:scaleX(0.9922);">Налаштування</span>
<span class="t" style="left:1339.46px;top:31.50px;font-size:18px;color:#1a1a1a;transform:scaleX(0.9448);">Вікна</span>
<span class="t" style="left:1404.00px;top:31.50px;font-size:18px;color:#1a1a1a;transform:scaleX(0.9447);">Довідка</span>
<span class="t" style="left:11.70px;top:63.90px;font-size:17.5px;color:#1a1a1a;transform:scaleX(1.0964);">Штрихкод або назва</span>
<span class="t" style="left:1847.74px;top:63.90px;font-size:17.5px;color:#1a1a1a;transform:scaleX(1.0592);">Ціна</span>
<span class="t" style="left:2019.61px;top:90.40px;font-size:24px;font-weight:700;transform:scaleX(0.9888);">Пошук</span>
<span class="t" style="left:35.60px;top:132.50px;font-size:16px;color:#1a1a1a;transform:scaleX(1.0666);">Авторедагування кількості</span>
<span class="t" style="left:46.30px;top:167.60px;font-size:17.5px;color:#1a1a1a;">Додати товар</span>
<span class="t" style="left:196.63px;top:167.60px;font-size:17.5px;color:#1a1a1a;transform:scaleX(0.9697);">Редагувати до (F4)</span>
<span class="t" style="left:385.26px;top:167.60px;font-size:17.5px;color:#9d9d9d;transform:scaleX(1.0397);">Розблокувати переоблік</span>
<span class="t" style="left:627.87px;top:167.60px;font-size:17.5px;color:#1a1a1a;transform:scaleX(1.0308);">Експорт</span>
<span class="t" style="left:735.20px;top:167.60px;font-size:17.5px;color:#1a1a1a;transform:scaleX(1.0619);">Друк</span>
<span class="t" style="left:2063.20px;top:167.60px;font-size:17.5px;color:#1a1a1a;transform:scaleX(1.0247);">Оновити</span>
<span class="t" style="left:21.98px;top:203.20px;font-size:15.5px;color:#1c1c28;transform:scaleX(1.1247);">№ п/п</span>
<span class="t" style="left:77.88px;top:203.20px;font-size:15.5px;color:#1c1c28;transform:scaleX(1.1184);">ID</span>
<span class="t" style="left:153.92px;top:203.20px;font-size:15.5px;color:#1c1c28;transform:scaleX(1.0806);">Назва товару</span>
<span class="t" style="left:662.75px;top:203.20px;font-size:15.5px;color:#1c1c28;transform:scaleX(1.0507);">Виробник</span>
<span class="t" style="left:849.60px;top:203.20px;font-size:15.5px;color:#1c1c28;transform:scaleX(1.1059);">Факт</span>
<span class="t" style="left:923.40px;top:203.20px;font-size:15.5px;color:#1c1c28;transform:scaleX(1.0453);">Зараз на решті</span>
<span class="t" style="left:1074.70px;top:203.20px;font-size:15.5px;color:#1c1c28;transform:scaleX(1.0632);">Залишки на поч…</span>
<span class="t" style="left:1227.47px;top:203.20px;font-size:15.5px;color:#1c1c28;transform:scaleX(1.0299);">Різниця</span>
<span class="t" style="left:1381.24px;top:203.20px;font-size:15.5px;color:#1c1c28;transform:scaleX(1.0616);">Нестачі більше ніж …</span>
<span class="t" style="left:1553.53px;top:203.20px;font-size:15.5px;color:#1c1c28;transform:scaleX(1.0715);">Контроль різниці</span>
<span class="t" style="left:1706.00px;top:203.20px;font-size:15.5px;color:#1c1c28;transform:scaleX(1.0851);">Стикерний штрихкод</span>
<span class="t" style="left:1888.98px;top:203.20px;font-size:15.5px;color:#1c1c28;transform:scaleX(1.0247);">Номер регістрації</span>
<span class="t" style="left:59.46px;top:230.50px;font-size:16px;font-weight:700;color:#fff;transform:scaleX(1.1600);">1</span>
<span class="t" style="left:83.83px;top:230.50px;font-size:16px;font-weight:700;color:#fff;transform:scaleX(1.1678);">105079</span>
<span class="t" style="left:154.70px;top:230.50px;font-size:16px;font-weight:700;color:#fff;transform:scaleX(1.1473);">Адамакс табл. п/о 50 мг №1</span>
<span class="t" style="left:662.53px;top:230.50px;font-size:16px;font-weight:700;color:#fff;transform:scaleX(1.0734);">Micro Labs</span>
<span class="t" style="left:849.70px;top:230.50px;font-size:16px;font-weight:700;color:#fff;transform:scaleX(1.1260);">0.000</span>
<span class="t" style="left:1020.60px;top:230.50px;font-size:16px;font-weight:700;color:#fff;transform:scaleX(1.1310);">0,000</span>
<span class="t" style="left:1163.71px;top:230.50px;font-size:16px;font-weight:700;color:#fff;transform:scaleX(1.1600);">32,000</span>
<span class="t" style="left:1346.66px;top:230.50px;font-size:16px;font-weight:700;color:#fff;transform:scaleX(1.1600);">-32</span>
<span class="t" style="left:1706.50px;top:230.50px;font-size:16px;font-weight:700;color:#fff;transform:scaleX(1.1651);">2060000198747</span>
<span class="t" style="left:1890.50px;top:230.50px;font-size:16px;font-weight:700;color:#fff;transform:scaleX(1.2398);">UA/14675/01/02</span>
<span class="t" style="left:59.46px;top:259.00px;font-size:16px;font-weight:700;transform:scaleX(1.1600);">2</span>
<span class="t" style="left:83.83px;top:259.00px;font-size:16px;font-weight:700;transform:scaleX(1.1678);">105067</span>
<span class="t" style="left:154.70px;top:259.00px;font-size:16px;font-weight:700;transform:scaleX(1.1161);">Амикацид р-р д/ин. 250 мг/мл фл. 4 мл №1</span>
<span class="t" style="left:662.56px;top:259.00px;font-size:16px;font-weight:700;transform:scaleX(1.0437);">Новофарм-Биосин...</span>
<span class="t" style="left:849.70px;top:259.00px;font-size:16px;font-weight:700;transform:scaleX(1.1260);">0.000</span>
<span class="t" style="left:1020.60px;top:259.00px;font-size:16px;font-weight:700;transform:scaleX(1.1310);">0,000</span>
<span class="t" style="left:1153.39px;top:259.00px;font-size:16px;font-weight:700;transform:scaleX(1.1600);">324,000</span>
<span class="t" style="left:1336.33px;top:259.00px;font-size:16px;font-weight:700;transform:scaleX(1.1600);">-324</span>
<span class="t" style="left:1706.50px;top:259.00px;font-size:16px;font-weight:700;transform:scaleX(1.1651);">2060000198761</span>
<span class="t" style="left:1890.50px;top:259.00px;font-size:16px;font-weight:700;transform:scaleX(1.2355);">UA/15452/01/01</span>
<span class="t" style="left:59.46px;top:287.50px;font-size:16px;font-weight:700;transform:scaleX(1.1600);">3</span>
<span class="t" style="left:83.83px;top:287.50px;font-size:16px;font-weight:700;transform:scaleX(1.1678);">105078</span>
<span class="t" style="left:153.58px;top:287.50px;font-size:16px;font-weight:700;transform:scaleX(1.1170);">Баралгин табл. №100</span>
<span class="t" style="left:662.53px;top:287.50px;font-size:16px;font-weight:700;transform:scaleX(1.0734);">Micro Labs</span>
<span class="t" style="left:849.70px;top:287.50px;font-size:16px;font-weight:700;transform:scaleX(1.1260);">0.000</span>
<span class="t" style="left:1020.60px;top:287.50px;font-size:16px;font-weight:700;transform:scaleX(1.1310);">0,000</span>
<span class="t" style="left:1163.71px;top:287.50px;font-size:16px;font-weight:700;transform:scaleX(1.1600);">50,000</span>
<span class="t" style="left:1346.66px;top:287.50px;font-size:16px;font-weight:700;transform:scaleX(1.1600);">-50</span>
<span class="t" style="left:1706.50px;top:287.50px;font-size:16px;font-weight:700;transform:scaleX(1.1651);">2060000197542</span>
<span class="t" style="left:59.46px;top:316.00px;font-size:16px;font-weight:700;transform:scaleX(1.1600);">4</span>
<span class="t" style="left:83.83px;top:316.00px;font-size:16px;font-weight:700;transform:scaleX(1.1678);">105059</span>
<span class="t" style="left:153.67px;top:316.00px;font-size:16px;font-weight:700;transform:scaleX(1.0263);">Бинт</span>
<span class="t" style="left:663.60px;top:316.00px;font-size:16px;font-weight:700;transform:scaleX(1.1156);">Alexpharm</span>
<span class="t" style="left:848.55px;top:316.00px;font-size:16px;font-weight:700;transform:scaleX(1.1548);">1.000</span>
<span class="t" style="left:1020.60px;top:316.00px;font-size:16px;font-weight:700;transform:scaleX(1.1310);">0,000</span>
<span class="t" style="left:1174.04px;top:316.00px;font-size:16px;font-weight:700;transform:scaleX(1.1600);">8,000</span>
<span class="t" style="left:1356.98px;top:316.00px;font-size:16px;font-weight:700;transform:scaleX(1.1600);">-7</span>
<span class="t" style="left:1706.50px;top:316.00px;font-size:16px;font-weight:700;transform:scaleX(1.1651);">2060000197702</span>
<span class="t" style="left:59.46px;top:344.50px;font-size:16px;font-weight:700;transform:scaleX(1.1600);">5</span>
<span class="t" style="left:83.83px;top:344.50px;font-size:16px;font-weight:700;transform:scaleX(1.1678);">105063</span>
<span class="t" style="left:153.67px;top:344.50px;font-size:16px;font-weight:700;transform:scaleX(1.0263);">Бинт</span>
<span class="t" style="left:663.60px;top:344.50px;font-size:16px;font-weight:700;transform:scaleX(1.1156);">Alexpharm</span>
<span class="t" style="left:849.70px;top:344.50px;font-size:16px;font-weight:700;transform:scaleX(1.1260);">0.000</span>
<span class="t" style="left:1020.60px;top:344.50px;font-size:16px;font-weight:700;transform:scaleX(1.1310);">0,000</span>
<span class="t" style="left:1174.04px;top:344.50px;font-size:16px;font-weight:700;transform:scaleX(1.1600);">1,000</span>
<span class="t" style="left:1356.98px;top:344.50px;font-size:16px;font-weight:700;transform:scaleX(1.1600);">-1</span>
<span class="t" style="left:1706.50px;top:344.50px;font-size:16px;font-weight:700;transform:scaleX(1.1651);">2060000197795</span>
<span class="t" style="left:59.46px;top:373.00px;font-size:16px;font-weight:700;transform:scaleX(1.1600);">6</span>
<span class="t" style="left:83.83px;top:373.00px;font-size:16px;font-weight:700;transform:scaleX(1.1678);">105077</span>
<span class="t" style="left:153.60px;top:373.00px;font-size:16px;font-weight:700;transform:scaleX(1.0967);">Бисопролол табл. 10 мг №30</span>
<span class="t" style="left:662.46px;top:373.00px;font-size:16px;font-weight:700;transform:scaleX(1.1364);">Merckle</span>
<span class="t" style="left:849.70px;top:373.00px;font-size:16px;font-weight:700;transform:scaleX(1.1260);">0.000</span>
<span class="t" style="left:1020.60px;top:373.00px;font-size:16px;font-weight:700;transform:scaleX(1.1310);">0,000</span>
<span class="t" style="left:1174.04px;top:373.00px;font-size:16px;font-weight:700;transform:scaleX(1.1600);">4,000</span>
<span class="t" style="left:1356.98px;top:373.00px;font-size:16px;font-weight:700;transform:scaleX(1.1600);">-4</span>
<span class="t" style="left:1706.50px;top:373.00px;font-size:16px;font-weight:700;transform:scaleX(1.1651);">2060000197948</span>
<span class="t" style="left:1890.50px;top:373.00px;font-size:16px;font-weight:700;transform:scaleX(1.2484);">UA/1728/01/02</span>
<span class="t" style="left:59.46px;top:401.50px;font-size:16px;font-weight:700;transform:scaleX(1.1600);">7</span>
<span class="t" style="left:83.83px;top:401.50px;font-size:16px;font-weight:700;transform:scaleX(1.1678);">105073</span>
<span class="t" style="left:154.70px;top:401.50px;font-size:16px;font-weight:700;transform:scaleX(1.1412);">Диабетон MR табл. 60мг №30 *</span>
<span class="t" style="left:663.60px;top:401.50px;font-size:16px;font-weight:700;transform:scaleX(1.1233);">Servier</span>
<span class="t" style="left:849.70px;top:401.50px;font-size:16px;font-weight:700;transform:scaleX(1.1260);">0.000</span>
<span class="t" style="left:1020.60px;top:401.50px;font-size:16px;font-weight:700;transform:scaleX(1.1310);">0,000</span>
<span class="t" style="left:1174.04px;top:401.50px;font-size:16px;font-weight:700;transform:scaleX(1.1600);">1,000</span>
<span class="t" style="left:1356.98px;top:401.50px;font-size:16px;font-weight:700;transform:scaleX(1.1600);">-1</span>
<span class="t" style="left:1706.50px;top:401.50px;font-size:16px;font-weight:700;transform:scaleX(1.1651);">2060000197771</span>
<span class="t" style="left:1890.50px;top:401.50px;font-size:16px;font-weight:700;transform:scaleX(1.2484);">UA/2158/02/02</span>
<span class="t" style="left:59.46px;top:430.00px;font-size:16px;font-weight:700;transform:scaleX(1.1600);">8</span>
<span class="t" style="left:83.83px;top:430.00px;font-size:16px;font-weight:700;transform:scaleX(1.1678);">105064</span>
<span class="t" style="left:154.70px;top:430.00px;font-size:16px;font-weight:700;transform:scaleX(1.0521);">ЗЕСТ МУЛЬТИВИТАМИН. КОКТЕЙЛЬ саше № 14</span>
<span class="t" style="left:662.51px;top:430.00px;font-size:16px;font-weight:700;transform:scaleX(1.0919);">Италия</span>
<span class="t" style="left:849.70px;top:430.00px;font-size:16px;font-weight:700;transform:scaleX(1.1260);">0.000</span>
<span class="t" style="left:1020.60px;top:430.00px;font-size:16px;font-weight:700;transform:scaleX(1.1310);">0,000</span>
<span class="t" style="left:1174.04px;top:430.00px;font-size:16px;font-weight:700;transform:scaleX(1.1600);">4,000</span>
<span class="t" style="left:1356.98px;top:430.00px;font-size:16px;font-weight:700;transform:scaleX(1.1600);">-4</span>
<span class="t" style="left:1706.50px;top:430.00px;font-size:16px;font-weight:700;transform:scaleX(1.1651);">2060000198105</span>
<span class="t" style="left:1890.50px;top:430.00px;font-size:16px;font-weight:700;transform:scaleX(1.1784);">2312311243525</span>
<span class="t" style="left:59.46px;top:458.50px;font-size:16px;font-weight:700;transform:scaleX(1.1600);">9</span>
<span class="t" style="left:83.83px;top:458.50px;font-size:16px;font-weight:700;transform:scaleX(1.1678);">105062</span>
<span class="t" style="left:154.70px;top:458.50px;font-size:16px;font-weight:700;transform:scaleX(1.0749);">ЗЕСТ позитив  табл. №14</span>
<span class="t" style="left:663.60px;top:458.50px;font-size:16px;font-weight:700;transform:scaleX(1.0572);">S.l.l.T.S.r.l.</span>
<span class="t" style="left:849.70px;top:458.50px;font-size:16px;font-weight:700;transform:scaleX(1.1260);">0.000</span>
<span class="t" style="left:1020.60px;top:458.50px;font-size:16px;font-weight:700;transform:scaleX(1.1310);">0,000</span>
<span class="t" style="left:1174.04px;top:458.50px;font-size:16px;font-weight:700;transform:scaleX(1.1600);">4,000</span>
<span class="t" style="left:1356.98px;top:458.50px;font-size:16px;font-weight:700;transform:scaleX(1.1600);">-4</span>
<span class="t" style="left:1706.50px;top:458.50px;font-size:16px;font-weight:700;transform:scaleX(1.1651);">2060000198129</span>
<span class="t" style="left:49.14px;top:487.00px;font-size:16px;font-weight:700;transform:scaleX(1.1600);">10</span>
<span class="t" style="left:83.83px;top:487.00px;font-size:16px;font-weight:700;transform:scaleX(1.1678);">105068</span>
<span class="t" style="left:153.57px;top:487.00px;font-size:16px;font-weight:700;transform:scaleX(1.1300);">Метформин табл. п/о 1000 мг №30</span>
<span class="t" style="left:663.60px;top:487.00px;font-size:16px;font-weight:700;transform:scaleX(1.1333);">Teva</span>
<span class="t" style="left:849.70px;top:487.00px;font-size:16px;font-weight:700;transform:scaleX(1.1260);">0.000</span>
<span class="t" style="left:1020.60px;top:487.00px;font-size:16px;font-weight:700;transform:scaleX(1.1310);">0,000</span>
<span class="t" style="left:1174.04px;top:487.00px;font-size:16px;font-weight:700;transform:scaleX(1.1600);">9,000</span>
<span class="t" style="left:1356.98px;top:487.00px;font-size:16px;font-weight:700;transform:scaleX(1.1600);">-9</span>
<span class="t" style="left:1706.50px;top:487.00px;font-size:16px;font-weight:700;transform:scaleX(1.1651);">2060000198631</span>
<span class="t" style="left:50.16px;top:515.50px;font-size:16px;font-weight:700;transform:scaleX(1.1600);">11</span>
<span class="t" style="left:83.83px;top:515.50px;font-size:16px;font-weight:700;transform:scaleX(1.1678);">105069</span>
<span class="t" style="left:153.55px;top:515.50px;font-size:16px;font-weight:700;transform:scaleX(1.1514);">Нимесулид пор. д/сусп. 100 мг/2 г, пакет 2 г №12</span>
<span class="t" style="left:663.60px;top:515.50px;font-size:16px;font-weight:700;transform:scaleX(1.1000);">Фармтехнология</span>
<span class="t" style="left:849.70px;top:515.50px;font-size:16px;font-weight:700;transform:scaleX(1.1260);">0.000</span>
<span class="t" style="left:1020.60px;top:515.50px;font-size:16px;font-weight:700;transform:scaleX(1.1310);">0,000</span>
<span class="t" style="left:1163.71px;top:515.50px;font-size:16px;font-weight:700;transform:scaleX(1.1600);">10,000</span>
<span class="t" style="left:1346.66px;top:515.50px;font-size:16px;font-weight:700;transform:scaleX(1.1600);">-10</span>
<span class="t" style="left:1706.50px;top:515.50px;font-size:16px;font-weight:700;transform:scaleX(1.1651);">2060000198617</span>
<span class="t" style="left:1890.50px;top:515.50px;font-size:16px;font-weight:700;transform:scaleX(1.2449);">UA/11489/02/01</span>
<span class="t" style="left:49.14px;top:544.00px;font-size:16px;font-weight:700;transform:scaleX(1.1600);">12</span>
<span class="t" style="left:83.83px;top:544.00px;font-size:16px;font-weight:700;transform:scaleX(1.1678);">105060</span>
<span class="t" style="left:154.70px;top:544.00px;font-size:16px;font-weight:700;transform:scaleX(1.0857);">Омез амп. 40 мл №40</span>
<span class="t" style="left:663.60px;top:544.00px;font-size:16px;font-weight:700;transform:scaleX(1.1550);">Доктор Реддис</span>
<span class="t" style="left:849.70px;top:544.00px;font-size:16px;font-weight:700;transform:scaleX(1.1260);">0.000</span>
<span class="t" style="left:1020.60px;top:544.00px;font-size:16px;font-weight:700;transform:scaleX(1.1310);">0,000</span>
<span class="t" style="left:1163.71px;top:544.00px;font-size:16px;font-weight:700;transform:scaleX(1.1600);">25,000</span>
<span class="t" style="left:1346.66px;top:544.00px;font-size:16px;font-weight:700;transform:scaleX(1.1600);">-25</span>
<span class="t" style="left:1706.50px;top:544.00px;font-size:16px;font-weight:700;transform:scaleX(1.1651);">2060000197689</span>
<span class="t" style="left:49.14px;top:572.50px;font-size:16px;font-weight:700;transform:scaleX(1.1600);">13</span>
<span class="t" style="left:83.83px;top:572.50px;font-size:16px;font-weight:700;transform:scaleX(1.1678);">105061</span>
<span class="t" style="left:153.56px;top:572.50px;font-size:16px;font-weight:700;transform:scaleX(1.1444);">Панадол таб. 10 №40</span>
<span class="t" style="left:663.60px;top:572.50px;font-size:16px;font-weight:700;transform:scaleX(1.0735);">AAR Pharma</span>
<span class="t" style="left:849.70px;top:572.50px;font-size:16px;font-weight:700;transform:scaleX(1.1260);">0.000</span>
<span class="t" style="left:1020.60px;top:572.50px;font-size:16px;font-weight:700;transform:scaleX(1.1310);">0,000</span>
<span class="t" style="left:1163.71px;top:572.50px;font-size:16px;font-weight:700;transform:scaleX(1.1600);">50,000</span>
<span class="t" style="left:1346.66px;top:572.50px;font-size:16px;font-weight:700;transform:scaleX(1.1600);">-50</span>
<span class="t" style="left:1706.50px;top:572.50px;font-size:16px;font-weight:700;transform:scaleX(1.1651);">2060000197726</span>
<span class="t" style="left:49.14px;top:601.00px;font-size:16px;font-weight:700;transform:scaleX(1.1600);">14</span>
<span class="t" style="left:83.83px;top:601.00px;font-size:16px;font-weight:700;transform:scaleX(1.1678);">105076</span>
<span class="t" style="left:153.59px;top:601.00px;font-size:16px;font-weight:700;transform:scaleX(1.1115);">Парацетамол беби сусп. орал. 2,4% саше 10 мл №20</span>
<span class="t" style="left:663.60px;top:601.00px;font-size:16px;font-weight:700;transform:scaleX(1.1027);">Здоровье</span>
<span class="t" style="left:849.70px;top:601.00px;font-size:16px;font-weight:700;transform:scaleX(1.1260);">0.000</span>
<span class="t" style="left:1020.60px;top:601.00px;font-size:16px;font-weight:700;transform:scaleX(1.1310);">0,000</span>
<span class="t" style="left:1174.04px;top:601.00px;font-size:16px;font-weight:700;transform:scaleX(1.1600);">4,000</span>
<span class="t" style="left:1356.98px;top:601.00px;font-size:16px;font-weight:700;transform:scaleX(1.1600);">-4</span>
<span class="t" style="left:1706.50px;top:601.00px;font-size:16px;font-weight:700;transform:scaleX(1.1651);">2060000197276</span>
<span class="t" style="left:1890.50px;top:601.00px;font-size:16px;font-weight:700;transform:scaleX(1.2449);">UA/11577/01/01</span>
<span class="t" style="left:49.14px;top:629.50px;font-size:16px;font-weight:700;transform:scaleX(1.1600);">15</span>
<span class="t" style="left:83.83px;top:629.50px;font-size:16px;font-weight:700;transform:scaleX(1.1678);">105066</span>
<span class="t" style="left:154.70px;top:629.50px;font-size:16px;font-weight:700;transform:scaleX(1.1281);">Темпалгин табл. №20 *</span>
<span class="t" style="left:663.60px;top:629.50px;font-size:16px;font-weight:700;transform:scaleX(1.0862);">Sopharma</span>
<span class="t" style="left:849.70px;top:629.50px;font-size:16px;font-weight:700;transform:scaleX(1.1260);">0.000</span>
<span class="t" style="left:1020.60px;top:629.50px;font-size:16px;font-weight:700;transform:scaleX(1.1310);">0,000</span>
<span class="t" style="left:1163.71px;top:629.50px;font-size:16px;font-weight:700;transform:scaleX(1.1600);">20,000</span>
<span class="t" style="left:1346.66px;top:629.50px;font-size:16px;font-weight:700;transform:scaleX(1.1600);">-20</span>
<span class="t" style="left:1706.50px;top:629.50px;font-size:16px;font-weight:700;transform:scaleX(1.1651);">2060000197566</span>
<span class="t" style="left:1890.50px;top:629.50px;font-size:16px;font-weight:700;transform:scaleX(1.2410);">UA/3553/01/01</span>
<span class="t" style="left:49.14px;top:658.00px;font-size:16px;font-weight:700;transform:scaleX(1.1600);">16</span>
<span class="t" style="left:83.83px;top:658.00px;font-size:16px;font-weight:700;transform:scaleX(1.1678);">105071</span>
<span class="t" style="left:154.70px;top:658.00px;font-size:16px;font-weight:700;transform:scaleX(1.1120);">Фармацитрон форте пор. 23г №10</span>
<span class="t" style="left:662.50px;top:658.00px;font-size:16px;font-weight:700;transform:scaleX(1.1012);">Pharmascience</span>
<span class="t" style="left:849.70px;top:658.00px;font-size:16px;font-weight:700;transform:scaleX(1.1260);">0.000</span>
<span class="t" style="left:1020.60px;top:658.00px;font-size:16px;font-weight:700;transform:scaleX(1.1310);">0,000</span>
<span class="t" style="left:1174.04px;top:658.00px;font-size:16px;font-weight:700;transform:scaleX(1.1600);">1,000</span>
<span class="t" style="left:1356.98px;top:658.00px;font-size:16px;font-weight:700;transform:scaleX(1.1600);">-1</span>
<span class="t" style="left:1706.50px;top:658.00px;font-size:16px;font-weight:700;transform:scaleX(1.1651);">2060000197894</span>
<span class="t" style="left:1890.50px;top:658.00px;font-size:16px;font-weight:700;transform:scaleX(1.2410);">UA/6249/01/01</span>
<span class="t" style="left:49.14px;top:686.50px;font-size:16px;font-weight:700;transform:scaleX(1.1600);">17</span>
<span class="t" style="left:83.83px;top:686.50px;font-size:16px;font-weight:700;transform:scaleX(1.1678);">105070</span>
<span class="t" style="left:153.59px;top:686.50px;font-size:16px;font-weight:700;transform:scaleX(1.1126);">Цитра Кальцемин таб. п/о фл. № 30</span>
<span class="t" style="left:662.52px;top:686.50px;font-size:16px;font-weight:700;transform:scaleX(1.0786);">Bayer Consumer Ca...</span>
<span class="t" style="left:849.70px;top:686.50px;font-size:16px;font-weight:700;transform:scaleX(1.1260);">0.000</span>
<span class="t" style="left:1020.60px;top:686.50px;font-size:16px;font-weight:700;transform:scaleX(1.1310);">0,000</span>
<span class="t" style="left:1174.04px;top:686.50px;font-size:16px;font-weight:700;transform:scaleX(1.1600);">1,000</span>
<span class="t" style="left:1356.98px;top:686.50px;font-size:16px;font-weight:700;transform:scaleX(1.1600);">-1</span>
<span class="t" style="left:1706.50px;top:686.50px;font-size:16px;font-weight:700;transform:scaleX(1.1651);">2060000198464</span>
<span class="t" style="left:1890.50px;top:686.50px;font-size:16px;font-weight:700;transform:scaleX(1.2149);">05.03.02-03/111255</span>
<span class="t" style="left:49.14px;top:715.00px;font-size:16px;font-weight:700;transform:scaleX(1.1600);">18</span>
<span class="t" style="left:83.83px;top:715.00px;font-size:16px;font-weight:700;transform:scaleX(1.1678);">105074</span>
<span class="t" style="left:153.60px;top:715.00px;font-size:16px;font-weight:700;transform:scaleX(1.1044);">Цитрамон  В табл. №10</span>
<span class="t" style="left:662.52px;top:715.00px;font-size:16px;font-weight:700;transform:scaleX(1.0834);">Монфарм</span>
<span class="t" style="left:849.70px;top:715.00px;font-size:16px;font-weight:700;transform:scaleX(1.1260);">0.000</span>
<span class="t" style="left:1020.60px;top:715.00px;font-size:16px;font-weight:700;transform:scaleX(1.1310);">0,000</span>
<span class="t" style="left:1163.71px;top:715.00px;font-size:16px;font-weight:700;transform:scaleX(1.1600);">12,000</span>
<span class="t" style="left:1346.66px;top:715.00px;font-size:16px;font-weight:700;transform:scaleX(1.1600);">-12</span>
<span class="t" style="left:1706.50px;top:715.00px;font-size:16px;font-weight:700;transform:scaleX(1.1651);">2060000198785</span>
<span class="t" style="left:1890.50px;top:715.00px;font-size:16px;font-weight:700;transform:scaleX(1.2410);">UA/7359/01/01</span>
<span class="t" style="left:49.14px;top:743.50px;font-size:16px;font-weight:700;transform:scaleX(1.1600);">21</span>
<span class="t" style="left:83.83px;top:743.50px;font-size:16px;font-weight:700;transform:scaleX(1.1678);">105072</span>
<span class="t" style="left:153.58px;top:743.50px;font-size:16px;font-weight:700;transform:scaleX(1.1221);">Цитрамон 5 табл. №6</span>
<span class="t" style="left:662.54px;top:743.50px;font-size:16px;font-weight:700;transform:scaleX(1.0611);">Борщаговский ХФЗ</span>
<span class="t" style="left:849.70px;top:743.50px;font-size:16px;font-weight:700;transform:scaleX(1.1260);">0.000</span>
<span class="t" style="left:1020.60px;top:743.50px;font-size:16px;font-weight:700;transform:scaleX(1.1310);">0,000</span>
<span class="t" style="left:1174.04px;top:743.50px;font-size:16px;font-weight:700;transform:scaleX(1.1600);">6,000</span>
<span class="t" style="left:1356.98px;top:743.50px;font-size:16px;font-weight:700;transform:scaleX(1.1600);">-6</span>
<span class="t" style="left:1706.50px;top:743.50px;font-size:16px;font-weight:700;transform:scaleX(1.1651);">2060000198174</span>
<span class="t" style="left:1890.50px;top:743.50px;font-size:16px;font-weight:700;transform:scaleX(1.2513);">UA/0811/01/01</span>
<span class="t" style="left:49.14px;top:772.00px;font-size:16px;font-weight:700;transform:scaleX(1.1600);">19</span>
<span class="t" style="left:83.83px;top:772.00px;font-size:16px;font-weight:700;transform:scaleX(1.1678);">105075</span>
<span class="t" style="left:153.60px;top:772.00px;font-size:16px;font-weight:700;transform:scaleX(1.1046);">Цитрамон В табл. №6</span>
<span class="t" style="left:662.52px;top:772.00px;font-size:16px;font-weight:700;transform:scaleX(1.0834);">Монфарм</span>
<span class="t" style="left:849.70px;top:772.00px;font-size:16px;font-weight:700;transform:scaleX(1.1260);">0.000</span>
<span class="t" style="left:1020.60px;top:772.00px;font-size:16px;font-weight:700;transform:scaleX(1.1310);">0,000</span>
<span class="t" style="left:1174.04px;top:772.00px;font-size:16px;font-weight:700;transform:scaleX(1.1600);">4,000</span>
<span class="t" style="left:1356.98px;top:772.00px;font-size:16px;font-weight:700;transform:scaleX(1.1600);">-4</span>
<span class="t" style="left:1706.50px;top:772.00px;font-size:16px;font-weight:700;transform:scaleX(1.1651);">2060000197252</span>
<span class="t" style="left:1890.50px;top:772.00px;font-size:16px;font-weight:700;transform:scaleX(1.2410);">UA/7359/01/01</span>
<span class="t" style="left:49.14px;top:800.50px;font-size:16px;font-weight:700;transform:scaleX(1.1600);">20</span>
<span class="t" style="left:83.83px;top:800.50px;font-size:16px;font-weight:700;transform:scaleX(1.1678);">105065</span>
<span class="t" style="left:153.57px;top:800.50px;font-size:16px;font-weight:700;transform:scaleX(1.1267);">Цитрамон табл. 300 мг №60</span>
<span class="t" style="left:663.60px;top:800.50px;font-size:16px;font-weight:700;transform:scaleX(1.1181);">Дарница</span>
<span class="t" style="left:849.70px;top:800.50px;font-size:16px;font-weight:700;transform:scaleX(1.1260);">0.000</span>
<span class="t" style="left:1020.60px;top:800.50px;font-size:16px;font-weight:700;transform:scaleX(1.1310);">0,000</span>
<span class="t" style="left:1163.71px;top:800.50px;font-size:16px;font-weight:700;transform:scaleX(1.1600);">99,000</span>
<span class="t" style="left:1346.66px;top:800.50px;font-size:16px;font-weight:700;transform:scaleX(1.1600);">-99</span>
<span class="t" style="left:1706.50px;top:800.50px;font-size:16px;font-weight:700;transform:scaleX(1.1651);">2060000197450</span>
<span class="t" style="left:157.40px;top:1213.20px;font-size:16px;font-weight:700;transform:scaleX(1.0746);">Запис 1 із 21</span>
<span class="t" style="left:851.85px;top:1213.20px;font-size:16px;font-weight:700;transform:scaleX(1.1548);">1,000</span>
<span class="t" style="left:1019.40px;top:1213.20px;font-size:16px;font-weight:700;transform:scaleX(1.1360);">0,000</span>
<span class="t" style="left:1152.00px;top:1213.20px;font-size:16px;font-weight:700;transform:scaleX(1.1599);">669,000</span>
<span class="t" style="left:46.30px;top:1274.00px;font-size:17.5px;color:#1a1a1a;transform:scaleX(1.0136);">Завантажити дані окремих перерахунків</span>
<span class="t" style="left:417.38px;top:1274.00px;font-size:17.5px;color:#1a1a1a;transform:scaleX(1.0190);">Перерахувати продажі</span>
<span class="t" style="left:645.70px;top:1274.00px;font-size:17.5px;color:#1a1a1a;transform:scaleX(1.0209);">Створити акт пересортиці</span>
<span class="t" style="left:8.27px;top:1313.70px;font-size:16px;color:#1a1a1a;transform:scaleX(1.0252);">Головна</span>
<span class="t" style="left:197.95px;top:1313.70px;font-size:16px;color:#1a1a1a;transform:scaleX(1.0525);">Інвентаризація</span>
<span class="t" style="left:390.00px;top:1313.70px;font-size:16px;color:#1a1a1a;transform:scaleX(1.0225);">Сумарні дані інвент …</span>
<span class="t" style="left:29.85px;top:1348.60px;font-size:19.5px;transform:scaleX(0.8495);">База даних: TASA3@TITAN</span>
<span class="t" style="left:328.68px;top:1348.60px;font-size:19.5px;transform:scaleX(0.8221);">Користувач: GIFT</span>
<span class="t" style="left:635.60px;top:1348.60px;font-size:19.5px;transform:scaleX(0.7636);">5</span>
<span class="t" style="left:665.95px;top:1348.60px;font-size:19.5px;transform:scaleX(0.8492);">Кассовый аппарат не подключен</span>
<span class="t" style="left:1123.30px;top:1348.60px;font-size:19.5px;transform:scaleX(0.8300);">Зона: Склад [1]</span>
</div></body></html>
